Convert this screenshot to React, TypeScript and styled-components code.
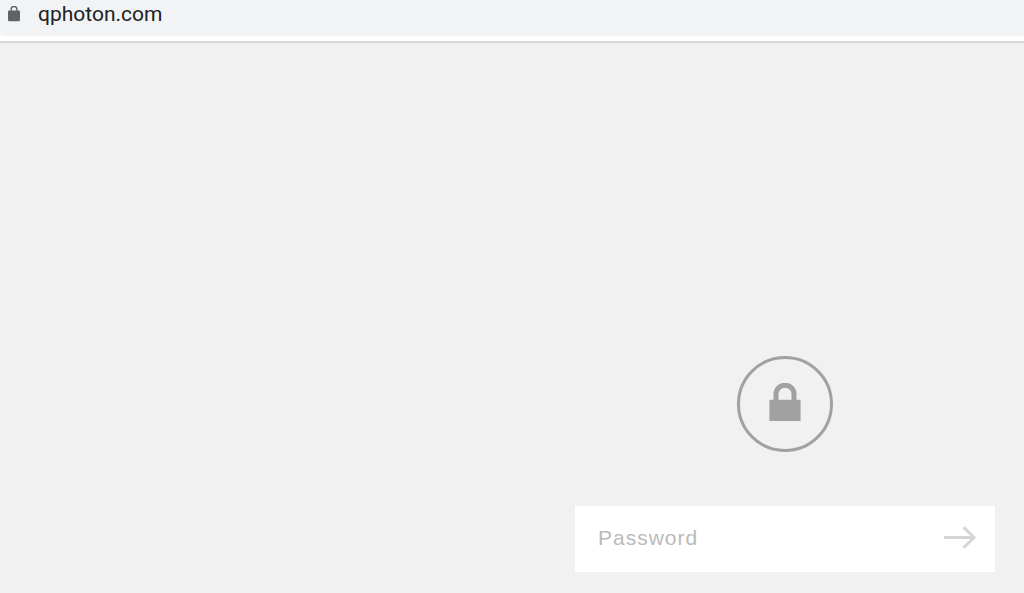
import React, { useState } from "react";
import styled, { createGlobalStyle } from "styled-components";

const GlobalStyle = createGlobalStyle`
  *, *::before, *::after { box-sizing: border-box; }
  body { margin: 0; background: #f1f1f1; }
`;

const Page = styled.div`
  min-height: 100vh;
  display: flex;
  flex-direction: column;
`;

const Toolbar = styled.header`
  background: #ffffff;
  padding-bottom: 5px;
  border-bottom: 2px solid #dadada;
`;

const AddressBar = styled.div`
  display: flex;
  align-items: center;
  gap: 18px;
  padding: 0 8px 8px;
  background: #f1f3f4;
  border-bottom-left-radius: 4px;
`;

const SecureIcon = styled.svg`
  display: block;
  flex: none;
  width: 12px;
  height: 16px;
`;

const Address = styled.span`
  font: 400 21px/28px Roboto, sans-serif;
  color: #202124;
`;

const Main = styled.main`
  flex: 1;
  display: flex;
  flex-direction: column;
  justify-content: flex-end;
  align-items: flex-end;
  padding: 21px 29px;
`;

const LockScreen = styled.section`
  display: flex;
  flex-direction: column;
  align-items: center;
  gap: 54px;
  width: 100%;
  max-width: 420px;
`;

const LockBadge = styled.div`
  display: flex;
  align-items: center;
  justify-content: center;
  width: 96px;
  height: 96px;
  border: 3px solid #a1a1a1;
  border-radius: 50%;
`;

const LockIcon = styled.svg`
  display: block;
  width: 32px;
  height: 42px;
`;

const PasswordForm = styled.form`
  display: flex;
  align-items: stretch;
  width: 100%;
  background: #ffffff;
`;

const PasswordInput = styled.input`
  flex: 1;
  min-width: 0;
  padding: 20px 0 22px 23px;
  border: 0;
  outline: 0;
  background: transparent;
  color: #555555;
  font: 400 21px/24px "Liberation Sans", Arial, sans-serif;
  letter-spacing: 1px;

  &::placeholder {
    color: #bababa;
    opacity: 1;
  }
`;

const SubmitButton = styled.button`
  display: flex;
  align-items: center;
  padding: 0 18px 4px;
  border: 0;
  background: transparent;
  cursor: pointer;
`;

const ArrowIcon = styled.svg`
  display: block;
  width: 34px;
  height: 24px;
`;

export default function App() {
  const [password, setPassword] = useState("");

  return (
    <>
      <GlobalStyle />
      <Page>
        <Toolbar>
          <AddressBar>
            <SecureIcon viewBox="0 0 12 16" aria-hidden="true">
              <path d="M3.1 6V3.2a2.9 2.7 0 0 1 5.8 0V6" fill="none" stroke="#5f6368" strokeWidth="1.4" />
              <rect y="4.6" width="12" height="10.6" rx="1.3" fill="#5f6368" />
            </SecureIcon>
            <Address>qphoton.com</Address>
          </AddressBar>
        </Toolbar>
        <Main>
          <LockScreen>
            <LockBadge>
              <LockIcon viewBox="0 0 32 42" aria-hidden="true">
                <path d="M7 21V11.2a9 9 0 0 1 18 0V21" fill="none" stroke="#a1a1a1" strokeWidth="5" />
                <rect x="0.4" y="16.8" width="31.2" height="21.2" fill="#a1a1a1" />
              </LockIcon>
            </LockBadge>
            <PasswordForm onSubmit={(event) => event.preventDefault()}>
              <PasswordInput
                type="password"
                aria-label="Password"
                placeholder="Password"
                value={password}
                onChange={(event) => setPassword(event.target.value)}
              />
              <SubmitButton type="submit" aria-label="Submit">
                <ArrowIcon viewBox="0 0 34 24" aria-hidden="true">
                  <path d="M1 12.5H31M20.5 2.2L31 12.5L20.5 22.8" fill="none" stroke="#d5d5d5" strokeWidth="3" />
                </ArrowIcon>
              </SubmitButton>
            </PasswordForm>
          </LockScreen>
        </Main>
      </Page>
    </>
  );
}
